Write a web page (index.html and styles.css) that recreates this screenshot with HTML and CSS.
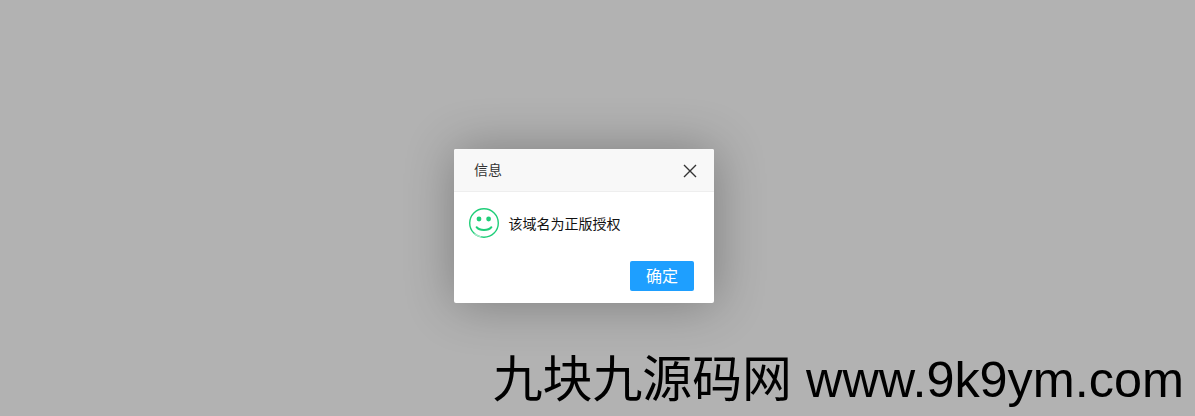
FILE: index.html
```html
<!DOCTYPE html>
<html lang="zh-CN">
<head>
<meta charset="utf-8">
<title>信息</title>
<link rel="stylesheet" href="styles.css">
</head>
<body>
<div class="shade"></div>
<div class="dialog" role="dialog">
  <div class="dialog-title">
    <span class="title-text">信息</span>
    <svg class="close" width="14" height="14" viewBox="0 0 14 14" aria-label="关闭"><path d="M1 1L13 13M13 1L1 13" fill="none" stroke="#333" stroke-width="1.4"/></svg>
  </div>
  <div class="dialog-content">
    <svg class="smile" width="30" height="30" viewBox="0 0 30 30">
      <circle cx="15" cy="15" r="14.3" fill="none" stroke="#1fce79" stroke-width="1.4"/>
      <path d="M5.5 25.5A14.3 14.3 0 0 0 12 29" fill="none" stroke="#a5ebc9" stroke-width="1.6"/>
      <circle cx="10" cy="11" r="2.4" fill="#1fce79"/>
      <circle cx="19.6" cy="11" r="2.4" fill="#1fce79"/>
      <path d="M7.6 19.2C10.5 23 19.5 23 22.4 19.2" fill="none" stroke="#1fce79" stroke-width="2" stroke-linecap="round"/>
    </svg>
    <span class="message">该域名为正版授权</span>
  </div>
  <div class="dialog-actions">
    <a class="btn">确定</a>
  </div>
</div>
<div class="watermark"><span class="watermark-cjk">九块九源码网</span> www.9k9ym.com</div>
</body>
</html>
```
FILE: styles.css
```css
html, body {
  margin: 0;
  height: 100%;
}
body {
  position: relative;
  overflow: hidden;
  background: #fff;
  font-family: "Liberation Sans", "Noto Sans CJK SC", sans-serif;
}
.shade {
  position: absolute;
  inset: 0;
  background: #b2b2b2;
}
.dialog {
  position: absolute;
  left: 454px;
  top: 149px;
  width: 260px;
  height: 154px;
  display: flex;
  flex-direction: column;
  background: #fff;
  border-radius: 2px;
  box-shadow: 1px 1px 50px rgba(0, 0, 0, 0.3);
}
.dialog-title {
  flex: none;
  display: flex;
  align-items: center;
  justify-content: space-between;
  height: 41px;
  padding: 1px 17px 0 20px;
  background: #f8f8f8;
  border-bottom: 1px solid #eee;
  border-radius: 2px 2px 0 0;
  font-size: 14px;
  color: #333;
}
.title-text {
  padding-bottom: 3px;
}
.dialog-content {
  display: flex;
  align-items: center;
  gap: 10px;
  padding: 16px 15px 0;
  font-size: 14px;
  color: #111;
}
.smile {
  flex: none;
}
.message {
  margin-left: -0.5px;
}
.dialog-actions {
  display: flex;
  justify-content: flex-end;
  padding: 23px 20px 0;
}
.btn {
  width: 64px;
  height: 30px;
  line-height: 31px;
  text-align: center;
  background: #1e9fff;
  color: #fff;
  font-size: 16px;
  border-radius: 2px;
}
.watermark {
  position: absolute;
  right: 11px;
  bottom: 6px;
  font-size: 50.4px;
  line-height: 60px;
  color: #000;
  white-space: nowrap;
}
.watermark-cjk {
  font-size: 49.9px;
}
```
